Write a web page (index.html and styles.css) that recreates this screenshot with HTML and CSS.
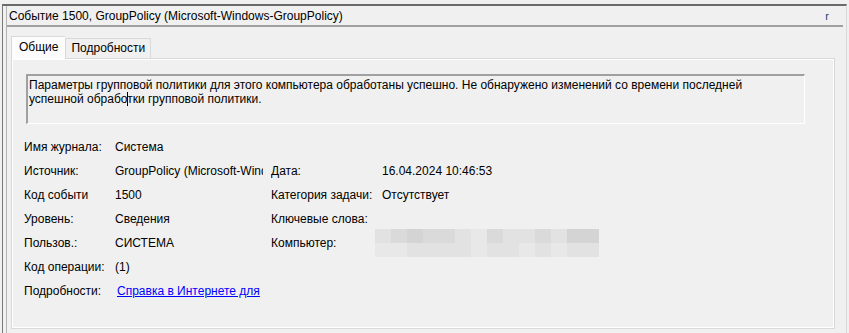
FILE: index.html
```html
<!DOCTYPE html>
<html>
<head>
  <title>Событие 1500</title>
  <link rel="stylesheet" href="styles.css">
</head>
<body>
  <div class="frame">
    <div class="inner">
      <div class="title">
        <span>Событие 1500, GroupPolicy (Microsoft-Windows-GroupPolicy)</span>
        <span class="title-mark">r</span>
      </div>
      <div class="tabs">
        <div class="tab tab-active">Общие</div>
        <div class="tab">Подробности</div>
      </div>
      <div class="panel">
        <div class="description">Параметры групповой политики для этого компьютера обработаны успешно. Не обнаружено изменений со времени последней успешной обрабо<span class="caret">тки</span> групповой политики.</div>
        <div class="fields">
          <div class="label">Имя журнала:</div>
          <div class="value">Система</div>
          <div class="label"></div>
          <div class="value"></div>

          <div class="label">Источник:</div>
          <div class="value">GroupPolicy (Microsoft-Windows-GroupPolicy)</div>
          <div class="label">Дата:</div>
          <div class="value">16.04.2024 10:46:53</div>

          <div class="label">Код событи</div>
          <div class="value">1500</div>
          <div class="label">Категория задачи:</div>
          <div class="value">Отсутствует</div>

          <div class="label">Уровень:</div>
          <div class="value">Сведения</div>
          <div class="label">Ключевые слова:</div>
          <div class="value"></div>

          <div class="label">Пользов.:</div>
          <div class="value">СИСТЕМА</div>
          <div class="label">Компьютер:</div>
          <div class="value value-open">
            <div class="blur">
              <i class="b1"></i><i class="b2"></i><i class="b3"></i><i class="b2"></i><i class="b2"></i><i class="b1"></i><i class="b0"></i><i class="b2"></i><i class="b1"></i><i class="b1"></i><i class="b2"></i><i class="b1"></i><i class="b3"></i><i class="b3"></i>
              <i class="b0"></i><i class="b0"></i><i class="b1"></i><i class="b1"></i><i class="b1"></i><i class="b1"></i><i class="b0"></i><i class="b1"></i><i class="b1"></i><i class="b0"></i><i class="b1"></i><i class="b0"></i><i class="b1"></i><i class="b1"></i>
            </div>
          </div>

          <div class="label">Код операции:</div>
          <div class="value">(1)</div>
          <div class="label"></div>
          <div class="value"></div>

          <div class="label">Подробности:</div>
          <div class="value"><a class="link" href="#">Справка в Интернете для</a></div>
          <div class="label"></div>
          <div class="value"></div>
        </div>
      </div>
    </div>
  </div>
</body>
</html>
```

FILE: styles.css
```css
html, body {
  margin: 0;
  height: 100%;
}

body {
  font-family: "Liberation Sans", Arial, sans-serif;
  font-size: 12px;
  color: #000;
  background-color: #f0f0f0;
  padding: 4px 2px 0 2px;
  box-sizing: border-box;
  overflow: hidden;
}

.frame {
  height: 100%;
  border-top: 2px solid #6a6a6a;
  border-left: 1px solid #7a7a7a;
  border-right: 1px solid #d8d8d8;
  box-sizing: border-box;
  padding-left: 3px;
  padding-right: 3px;
}

.inner {
  height: 100%;
  border-left: 1px solid #b4b4b4;
}

.title {
  display: flex;
  justify-content: space-between;
  align-items: center;
  height: 19px;
  padding: 0 14px 0 2px;
  border-bottom: 2px solid #a0a0a0;
}

.title-mark {
  color: #1f3f6f;
  font-size: 11px;
}

.tabs {
  display: flex;
  align-items: flex-end;
  margin: 8px 0 0 4px;
  height: 23px;
}

.tab {
  height: 19px;
  line-height: 19px;
  padding: 0 5px;
  border: 1px solid #d9d9d9;
  border-bottom: none;
  background-color: #f0f0f0;
}

.tab-active {
  height: 22px;
  line-height: 21px;
  padding: 0 7px;
  background-color: #fcfcfc;
  border-right: none;
  margin-bottom: -1px;
  position: relative;
}

.panel {
  margin: 0 8px 0 4px;
  height: 271px;
  box-sizing: border-box;
  border: 1px solid #d9d9d9;
  box-shadow: inset 1px 1px 0 #fff, inset -1px -1px 0 #fff;
  padding: 15px 29px 0 14px;
}

.description {
  height: 50px;
  box-sizing: border-box;
  border-top: 2px solid #a0a0a0;
  border-left: 2px solid #a0a0a0;
  border-right: 1px solid #fff;
  border-bottom: 1px solid #fff;
  padding: 2px 50px 0 1px;
  line-height: 14px;
}

.caret {
  box-shadow: inset 1px 0 0 #000;
}

.fields {
  display: grid;
  grid-template-columns: 91px 156px 111px 1fr;
  grid-auto-rows: 24px;
  margin: 11px 0 0 -2px;
  align-items: center;
}

.label,
.value {
  white-space: nowrap;
  overflow: hidden;
}

.value {
  margin-right: 8px;
}

.value-open {
  overflow: visible;
}

.link {
  color: #0000ff;
  margin-left: 2px;
}

.blur {
  display: grid;
  grid-template-columns: repeat(14, 16px);
  grid-template-rows: 14px 14px;
  margin-left: -7px;
}

.blur i {
  display: block;
}

.b0 { background-color: #e8e8e8; }
.b1 { background-color: #e2e2e2; }
.b2 { background-color: #dadada; }
.b3 { background-color: #d4d4d4; }
```
